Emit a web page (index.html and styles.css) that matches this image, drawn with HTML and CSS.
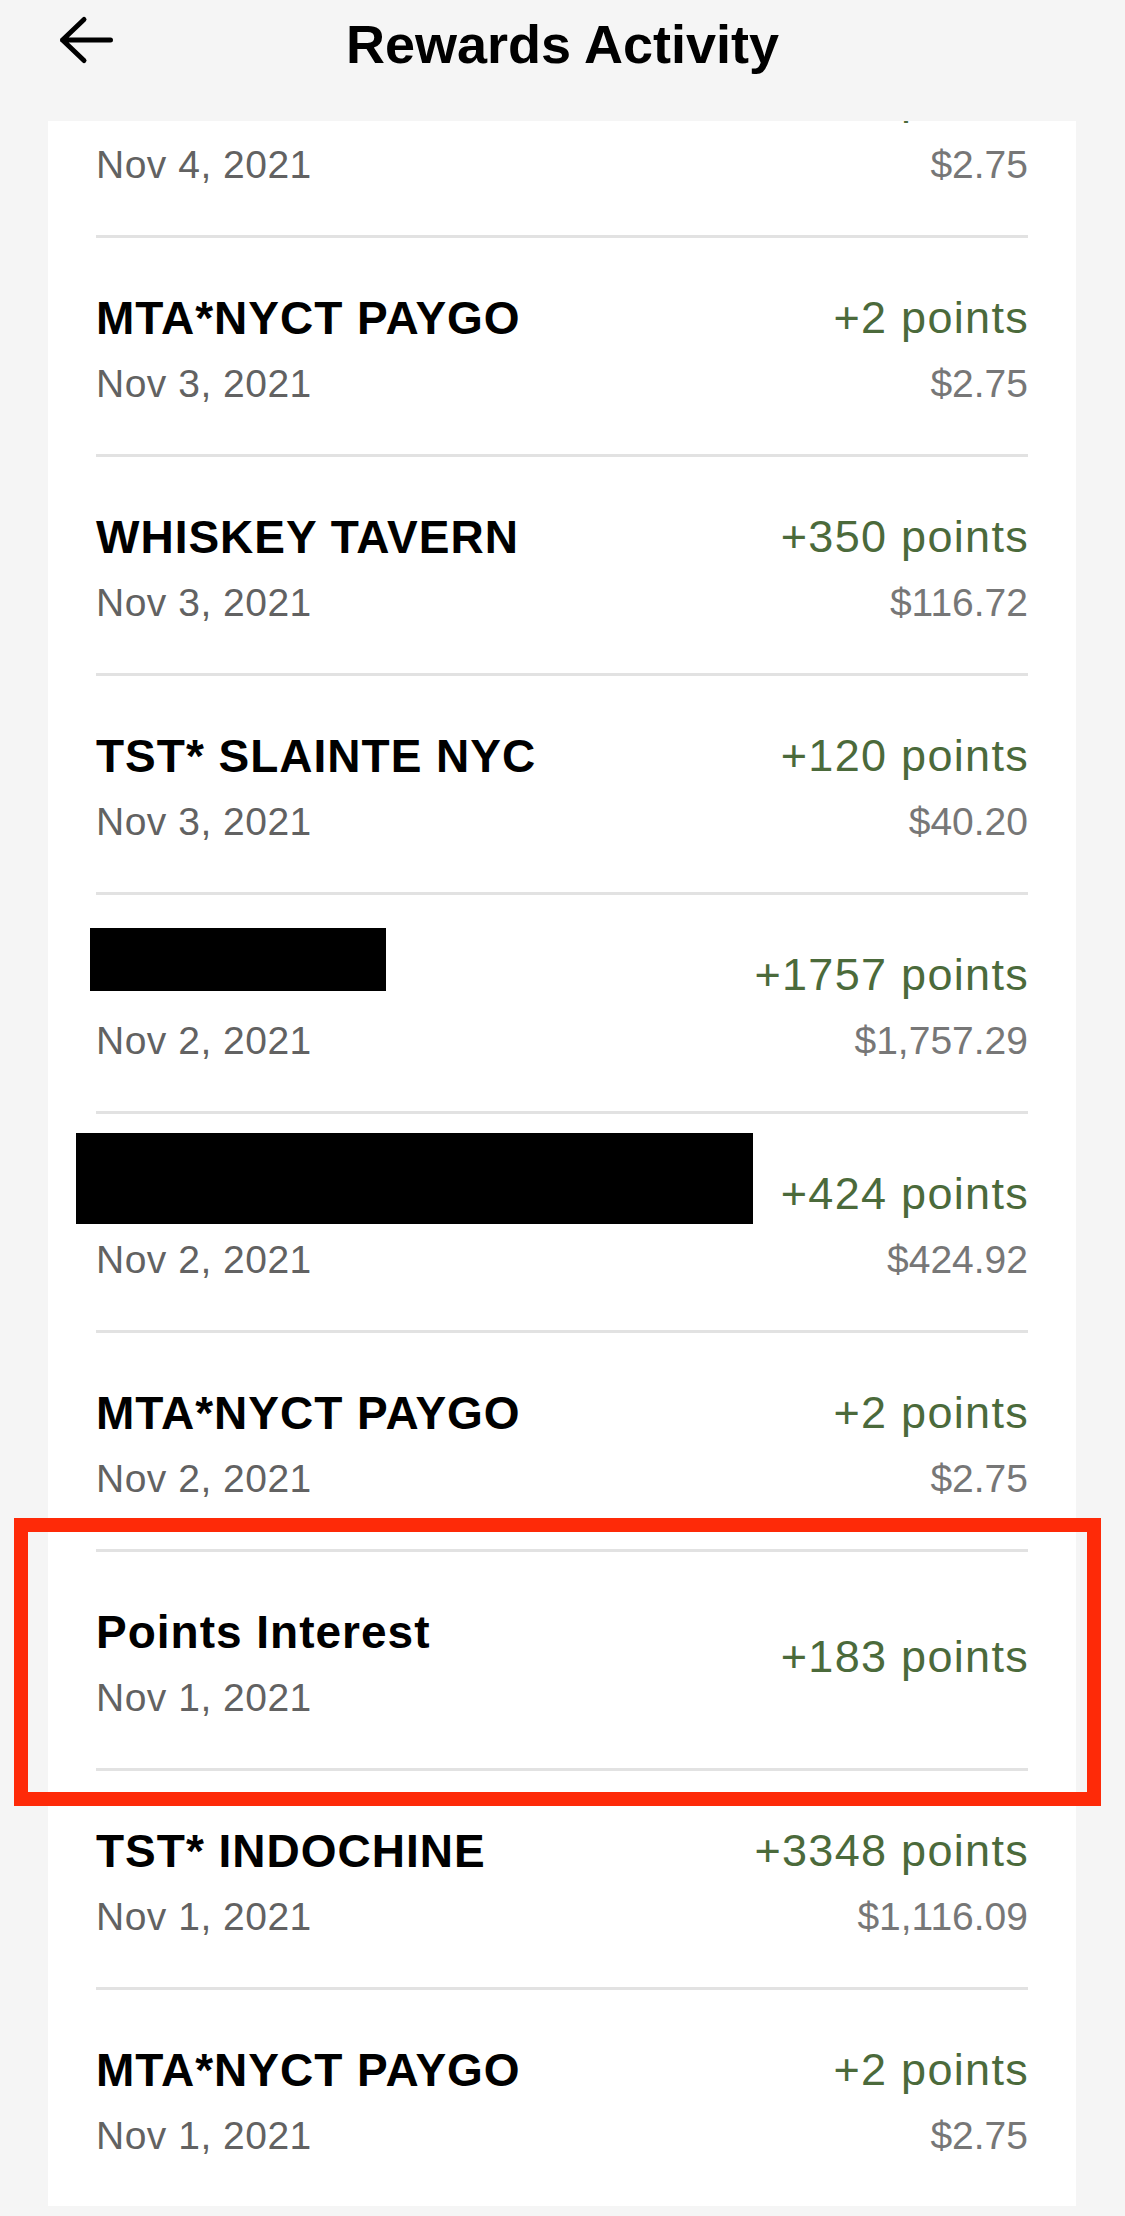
FILE: index.html
```html
<!DOCTYPE html>
<html lang="en">
<head>
<meta charset="utf-8">
<title>Rewards Activity</title>
<link rel="stylesheet" href="styles.css">
</head>
<body>
<header class="topbar">
  <button class="back" aria-label="Back">
    <svg width="56" height="50" viewBox="0 0 56 50"><path d="M26 4.5 L4.5 25 L26 45.5 M4.5 25 H52.5" fill="none" stroke="#000" stroke-width="5" stroke-linecap="round" stroke-linejoin="round"/></svg>
  </button>
  <h1 class="title">Rewards Activity</h1>
  <span></span>
</header>

<main class="card">
  <div class="list">
    <div class="row">
      <div class="col"><div class="name">MTA*NYCT PAYGO</div><div class="date">Nov 4, 2021</div></div>
      <div class="col right"><div class="pts">+2 points</div><div class="amt">$2.75</div></div>
    </div>
    <div class="row">
      <div class="col"><div class="name">MTA*NYCT PAYGO</div><div class="date">Nov 3, 2021</div></div>
      <div class="col right"><div class="pts">+2 points</div><div class="amt">$2.75</div></div>
    </div>
    <div class="row">
      <div class="col"><div class="name">WHISKEY TAVERN</div><div class="date">Nov 3, 2021</div></div>
      <div class="col right"><div class="pts">+350 points</div><div class="amt">$116.72</div></div>
    </div>
    <div class="row">
      <div class="col"><div class="name">TST* SLAINTE NYC</div><div class="date">Nov 3, 2021</div></div>
      <div class="col right"><div class="pts">+120 points</div><div class="amt">$40.20</div></div>
    </div>
    <div class="row">
      <div class="col"><div class="name"></div><div class="date">Nov 2, 2021</div></div>
      <div class="col right"><div class="pts">+1757 points</div><div class="amt">$1,757.29</div></div>
      <div class="redact redact-a" aria-label="redacted"></div>
    </div>
    <div class="row">
      <div class="col"><div class="name"></div><div class="date">Nov 2, 2021</div></div>
      <div class="col right"><div class="pts">+424 points</div><div class="amt">$424.92</div></div>
      <div class="redact redact-b" aria-label="redacted"></div>
    </div>
    <div class="row">
      <div class="col"><div class="name">MTA*NYCT PAYGO</div><div class="date">Nov 2, 2021</div></div>
      <div class="col right"><div class="pts">+2 points</div><div class="amt">$2.75</div></div>
    </div>
    <div class="row">
      <div class="col"><div class="name">Points Interest</div><div class="date">Nov 1, 2021</div></div>
      <div class="col right single"><div class="pts">+183 points</div></div>
    </div>
    <div class="row">
      <div class="col"><div class="name">TST* INDOCHINE</div><div class="date">Nov 1, 2021</div></div>
      <div class="col right"><div class="pts">+3348 points</div><div class="amt">$1,116.09</div></div>
    </div>
    <div class="row">
      <div class="col"><div class="name">MTA*NYCT PAYGO</div><div class="date">Nov 1, 2021</div></div>
      <div class="col right"><div class="pts">+2 points</div><div class="amt">$2.75</div></div>
    </div>
  </div>
</main>

<div class="highlight"></div>
</body>
</html>
```

FILE: styles.css
```css
html {
  background: #f5f5f5;
}
body {
  margin: 0;
  position: relative;
  min-height: 2216px;
  font-family: "Liberation Sans", Arial, sans-serif;
  color: #000;
}
.topbar {
  display: grid;
  grid-template-columns: 1fr auto 1fr;
  align-items: start;
  padding-top: 8px;
  margin-bottom: 41px;
}
.back {
  justify-self: start;
  margin: 7px 0 0 58px;
  padding: 0;
  border: 0;
  background: none;
  display: block;
  line-height: 0;
}
.title {
  margin: 0;
  font-size: 54px;
  line-height: 72px;
  font-weight: 700;
}
.card {
  display: block;
  margin: 0 49px 0 48px;
  background: #fff;
  overflow: hidden;
}
.list {
  margin-top: -102px;
  padding: 0 48px;
}
.row {
  position: relative;
  height: 216px;
  display: flex;
  justify-content: space-between;
  align-items: center;
}
.row + .row {
  border-top: 3px solid #e2e2e2;
}
.col {
  display: flex;
  flex-direction: column;
  margin-top: 5px;
}
.col.right {
  align-items: flex-end;
}
.col.single {
  margin-top: 0;
  margin-bottom: 6px;
}
.name {
  font-size: 46px;
  line-height: 54px;
  height: 54px;
  font-weight: 700;
  letter-spacing: 1px;
  white-space: nowrap;
}
.date,
.amt {
  margin-top: 16px;
  font-size: 39px;
  line-height: 46px;
  white-space: nowrap;
}
.date {
  color: #626262;
  letter-spacing: 0.5px;
}
.amt {
  color: #777777;
}
.pts {
  font-size: 45px;
  line-height: 54px;
  letter-spacing: 1.3px;
  margin-right: -1px;
  color: #4b6a3b;
  white-space: nowrap;
}
.redact {
  position: absolute;
  background: #000;
}
.redact-a {
  left: -6px;
  top: 33px;
  width: 296px;
  height: 63px;
}
.redact-b {
  left: -20px;
  top: 19px;
  width: 677px;
  height: 91px;
}
.highlight {
  position: absolute;
  left: 14px;
  top: 1518px;
  width: 1087px;
  height: 288px;
  box-sizing: border-box;
  border: 14px solid #fe2a08;
}
```
